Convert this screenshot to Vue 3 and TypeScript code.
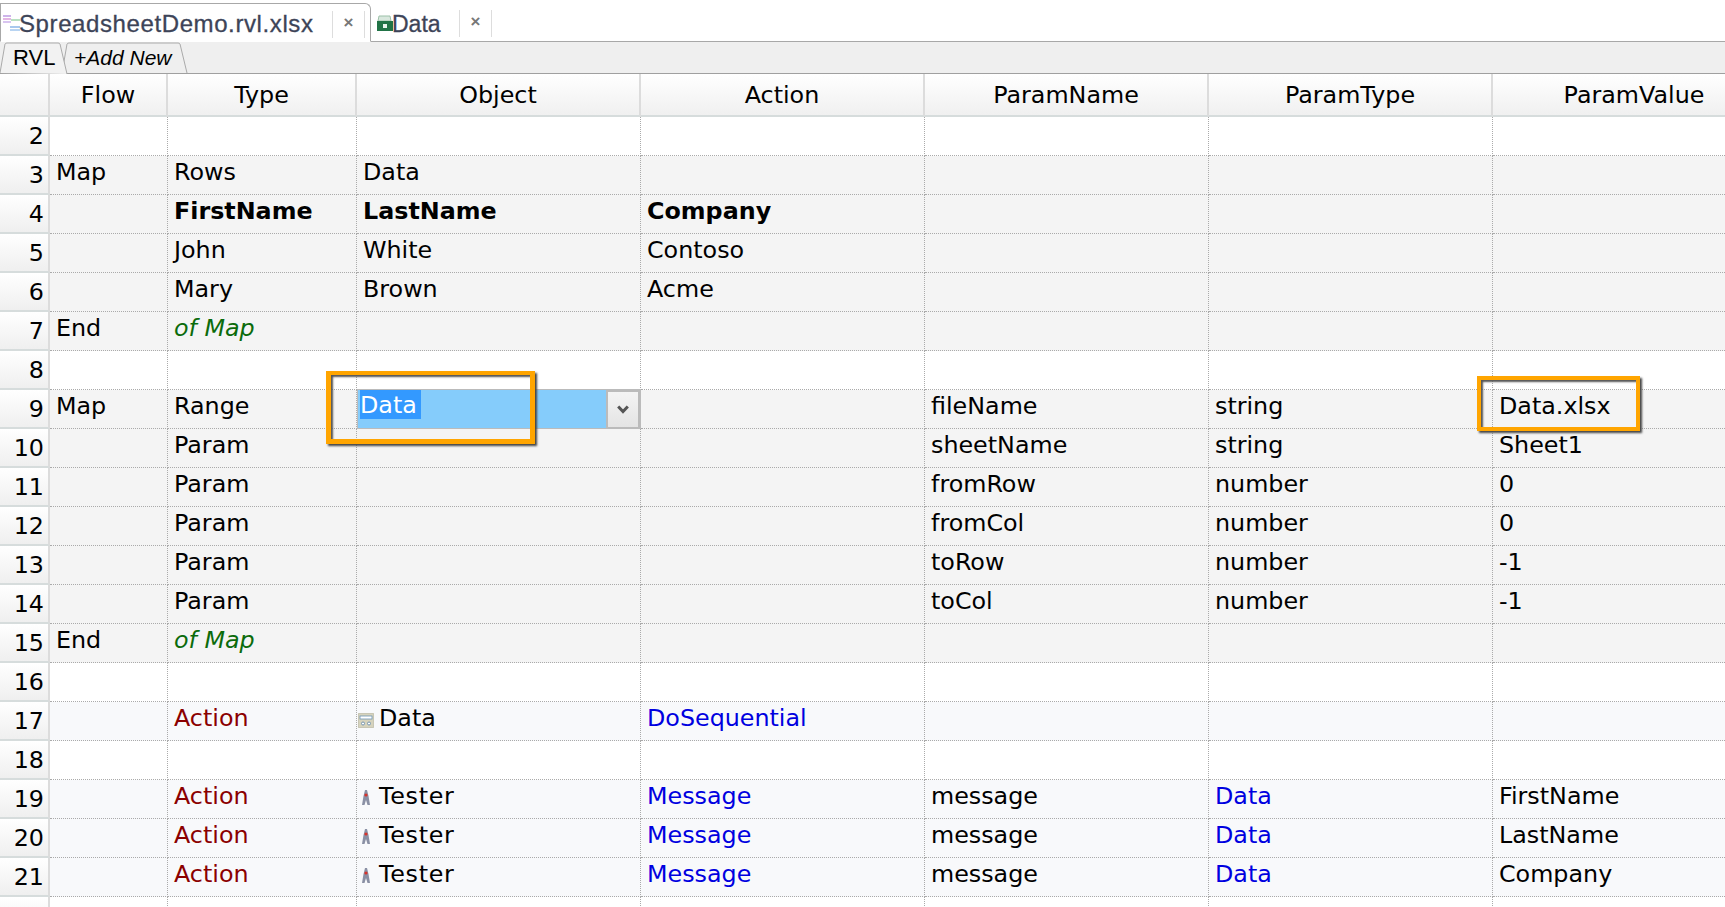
<template>
  <div class="sheet-app">
    <div class="doc-tabs">
      <div class="doc-tab active">
        <svg class="rvl-icon" width="17" height="18" viewBox="0 0 17 18">
          <rect x="0" y="1" width="8" height="2" fill="#cdb4ea" />
          <rect x="0" y="4" width="8" height="2" fill="#e4b6e4" />
          <rect x="0" y="7" width="8" height="2" fill="#d8c4f0" />
          <rect x="8" y="5" width="9" height="2" fill="#b8e0c0" />
          <rect x="7" y="12" width="10" height="2" fill="#a8c8ee" />
          <rect x="7" y="15" width="10" height="2" fill="#b8d4f2" />
        </svg>
        <span class="doc-title main">SpreadsheetDemo.rvl.xlsx</span>
        <span class="doc-close first">×</span>
      </div>
      <div class="doc-tab">
        <svg class="xl-icon" width="16" height="17" viewBox="0 0 16 17">
          <path d="M2 1h11l1 5H1z" fill="#d9e8de" stroke="#9cc0a8" stroke-width="1" />
          <rect x="0" y="6" width="16" height="10" fill="#217346" />
          <rect x="6" y="9" width="4" height="4" fill="#e8f3ec" />
        </svg>
        <span class="doc-title sub">Data</span>
        <span class="doc-close second">×</span>
      </div>
    </div>

    <div class="sheet-tabs">
      <svg class="sheet-tab-shape" width="200" height="32" viewBox="0 0 200 32">
        <path d="M62 31 L67 2 Q67.500 1 69 1 H178 Q179.500 1 180 2 L187 31" fill="#efefef" stroke="#aaa" />
        <path d="M0 31 L5 2 Q5.500 1 7 1 H58 Q59.500 1 60 2 L67 32" fill="#f2f2f2" stroke="#aaa" />
      </svg>
      <span class="sheet-tab rvl">RVL</span>
      <span class="sheet-tab add">+Add New</span>
    </div>

    <div class="grid">
      <div class="head corner"></div>
      <div v-for="col in columns" :key="col" class="head">{{ col }}</div>

      <template v-for="row in rows" :key="row.n">
        <div class="row-num">{{ row.n }}</div>
        <div
          v-for="(cell, i) in row.cells"
          :key="i"
          class="cell"
          :class="[row.tone, cell.kind]"
        >
          <svg v-if="cell.icon === 'data'" class="data-icon" width="16" height="15" viewBox="0 0 16 15">
            <rect x="0.500" y="0.500" width="15" height="14" fill="#d6d3bd" stroke="#a8a68c" stroke-dasharray="1 1" />
            <rect x="2" y="3" width="12" height="3" fill="#fff" stroke="#6d93b5" stroke-width="0.800" />
            <circle cx="5" cy="10.500" r="1.500" fill="#fff" stroke="#5d83a5" stroke-width="0.800" />
            <circle cx="11" cy="10.500" r="1.500" fill="#fff" stroke="#5d83a5" stroke-width="0.800" />
          </svg>
          <svg v-if="cell.icon === 'tester'" class="tester-icon" width="8" height="15" viewBox="0 0 8 15">
            <path d="M3 0 H5 L6.500 6 L8 15 H5.500 L4 10 L2.500 15 H0 L1.500 6 Z" fill="#8a90a4" />
            <circle cx="4" cy="5" r="1.600" fill="#d8322a" />
          </svg>
          <span>{{ cell.text }}</span>
          <template v-if="cell.kind === 'editing'">
            <span class="combo">
              <span class="combo-text"><span class="combo-sel">Data</span></span>
              <span class="combo-btn">
                <svg width="12" height="9" viewBox="0 0 12 9">
                  <path d="M1.200 1.500 L6 6.500 L10.800 1.500" fill="none" stroke="#555" stroke-width="3" />
                </svg>
              </span>
            </span>
            <span class="callout object-callout"></span>
          </template>
          <span v-if="cell.kind === 'marked'" class="callout value-callout"></span>
        </div>
      </template>
    </div>
  </div>
</template>

<script setup lang="ts">
interface Cell {
  text: string
  kind?: string
  icon?: string
}

interface Row {
  n: number
  tone: string
  cells: Cell[]
}

const columns = ['Flow', 'Type', 'Object', 'Action', 'ParamName', 'ParamType', 'ParamValue']

function makeRow(n: number, tone: string, values: (string | Cell)[] = []): Row {
  const cells: Cell[] = []
  for (let i = 0; i < 7; i++) {
    const v = values[i] ?? ''
    cells.push(typeof v === 'string' ? { text: v } : v)
  }
  return { n, tone, cells }
}

const ofMap: Cell = { text: 'of Map', kind: 'comment' }
const b = (text: string): Cell => ({ text, kind: 'bold' })
const action: Cell = { text: 'Action', kind: 'red' }
const blue = (text: string): Cell => ({ text, kind: 'blue' })
const tester: Cell = { text: 'Tester', icon: 'tester', kind: 'with-tester' }

const rows: Row[] = [
  makeRow(2, 'white'),
  makeRow(3, 'grey', ['Map', 'Rows', 'Data']),
  makeRow(4, 'grey', ['', b('FirstName'), b('LastName'), b('Company')]),
  makeRow(5, 'grey', ['', 'John', 'White', 'Contoso']),
  makeRow(6, 'grey', ['', 'Mary', 'Brown', 'Acme']),
  makeRow(7, 'grey', ['End', ofMap]),
  makeRow(8, 'white'),
  makeRow(9, 'grey', ['Map', 'Range', { text: '', kind: 'editing' }, '', 'fileName', 'string', { text: 'Data.xlsx', kind: 'marked' }]),
  makeRow(10, 'grey', ['', 'Param', '', '', 'sheetName', 'string', 'Sheet1']),
  makeRow(11, 'grey', ['', 'Param', '', '', 'fromRow', 'number', '0']),
  makeRow(12, 'grey', ['', 'Param', '', '', 'fromCol', 'number', '0']),
  makeRow(13, 'grey', ['', 'Param', '', '', 'toRow', 'number', '-1']),
  makeRow(14, 'grey', ['', 'Param', '', '', 'toCol', 'number', '-1']),
  makeRow(15, 'grey', ['End', ofMap]),
  makeRow(16, 'white'),
  makeRow(17, 'pale', ['', action, { text: 'Data', icon: 'data', kind: 'with-data' }, blue('DoSequential')]),
  makeRow(18, 'white'),
  makeRow(19, 'pale', ['', action, tester, blue('Message'), 'message', blue('Data'), 'FirstName']),
  makeRow(20, 'pale', ['', action, tester, blue('Message'), 'message', blue('Data'), 'LastName']),
  makeRow(21, 'pale', ['', action, tester, blue('Message'), 'message', blue('Data'), 'Company']),
  makeRow(22, 'white'),
]
</script>

<style scoped>
.sheet-app {
  width: 1725px;
  height: 907px;
  overflow: hidden;
  background: #fff;
  font-family: "DejaVu Sans", Verdana, sans-serif;
  color: #000;
}

.doc-tabs {
  height: 42px;
  display: flex;
  align-items: flex-end;
  box-sizing: border-box;
  border-bottom: 1px solid #a8a8a8;
}

.doc-tab {
  position: relative;
  display: flex;
  align-items: center;
  height: 39px;
  margin-bottom: -1px;
  box-sizing: border-box;
}

.doc-tab.active {
  width: 371px;
  border: 1px solid #a8a8a8;
  border-bottom: 1px solid #fff;
  border-radius: 0 6px 0 0;
  padding-left: 2px;
}

.doc-title {
  margin-top: 3px;
  font-family: "Liberation Sans", Arial, sans-serif;
  color: #3d4458;
  -webkit-text-stroke: 0.3px #3d4458;
}

.doc-title.main {
  font-size: 24px;
  letter-spacing: 0.6px;
}

.doc-title.sub {
  font-size: 23px;
}

.rvl-icon {
  margin-right: -1px;
}

.xl-icon {
  margin: 2px -1px 0 6px;
}

.doc-close {
  position: absolute;
  top: 7px;
  height: 27px;
  width: 33px;
  box-sizing: border-box;
  border-left: 1px solid #ddd;
  border-right: 1px solid #ddd;
  text-align: center;
  font-family: "Liberation Sans", Arial, sans-serif;
  font-size: 17px;
  font-weight: 700;
  line-height: 24px;
  color: #777;
}

.doc-close.first {
  left: 331px;
}

.doc-close.second {
  left: 88px;
}

.sheet-tabs {
  position: relative;
  height: 32px;
  display: flex;
  box-sizing: border-box;
  background: #efefef;
  border-bottom: 1px solid #a0a0a0;
}

.sheet-tab-shape {
  position: absolute;
  left: 0;
  top: 0;
}

.sheet-tab {
  position: relative;
  line-height: 31px;
}

.sheet-tab.rvl {
  font-family: "Liberation Sans", Arial, sans-serif;
  font-size: 22px;
  margin-left: 13px;
  width: 60px;
}

.sheet-tab.add {
  font-family: "Liberation Sans", Arial, sans-serif;
  font-style: italic;
  font-size: 21px;
  margin-left: 1px;
}

.grid {
  display: grid;
  grid-template-columns: 50px 118px 189px 284px 284px 284px 284px 284px;
  grid-template-rows: 43px;
  grid-auto-rows: 39px;
  font-size: 23.8px;
}

.head {
  display: flex;
  align-items: center;
  justify-content: center;
  box-sizing: border-box;
  background: linear-gradient(#ffffff, #f0f0f0);
  border-right: 2px solid #dcdcdc;
  border-bottom: 2px solid #d6dcdc;
  padding-top: 1px;
}

.row-num {
  display: flex;
  align-items: center;
  justify-content: flex-end;
  box-sizing: border-box;
  padding: 1px 4px 0 0;
  background: linear-gradient(#ffffff, #efefef);
  border-right: 2px solid #dcdcdc;
  border-bottom: 2px solid #d6dcdc;
}

.cell {
  position: relative;
  display: flex;
  align-items: center;
  box-sizing: border-box;
  padding: 0 0 6px 6px;
  border-right: 1px dotted #aaa;
  border-bottom: 1px dotted #aaa;
  white-space: nowrap;
}

.cell.white {
  background: #fff;
}

.cell.grey {
  background: #f4f4f4;
}

.cell.pale {
  background: #f8f9fb;
}

.cell.bold {
  font-weight: 700;
}

.cell.comment {
  font-style: italic;
  color: #0b6b0b;
}

.cell.red {
  color: #8b0000;
}

.cell.blue {
  color: #0000e0;
}

.cell.with-data {
  padding-left: 1px;
}

.cell.with-tester {
  padding-left: 5px;
  letter-spacing: 0.7px;
}

.data-icon {
  margin: 4px 5px 0 0;
}

.tester-icon {
  margin: 3px 9px 0 0;
  filter: blur(0.4px);
}

.combo {
  position: absolute;
  left: 0;
  top: -1px;
  width: 284px;
  height: 40px;
  display: flex;
  box-sizing: border-box;
  background: #85ccfb;
  border: 1px solid #bbb;
  z-index: 1;
}

.combo-text {
  flex: 1;
  padding-left: 2px;
}

.combo-sel {
  display: inline-block;
  padding-right: 4px;
  background: #3399ff;
  color: #fff;
  height: 29px;
  line-height: 30px;
}

.combo-btn {
  width: 34px;
  margin-bottom: -1px;
  display: flex;
  align-items: center;
  justify-content: center;
  box-sizing: border-box;
  background: linear-gradient(#f4f4f4, #e4e4e4);
  border: 2px solid #bbb;
}

.callout {
  position: absolute;
  box-sizing: border-box;
  border: 4px solid #ffa500;
  box-shadow: 2px 2px 2px #444, inset 2px 2px 2px #555;
  z-index: 2;
  pointer-events: none;
}

.object-callout {
  left: -31px;
  top: -19px;
  width: 209px;
  height: 73px;
  border-width: 4px 5px 5px 5px;
}

.value-callout {
  left: -16px;
  top: -14px;
  width: 163px;
  height: 55px;
}
</style>

<style>
html,
body {
  margin: 0;
  overflow: hidden;
}
</style>
